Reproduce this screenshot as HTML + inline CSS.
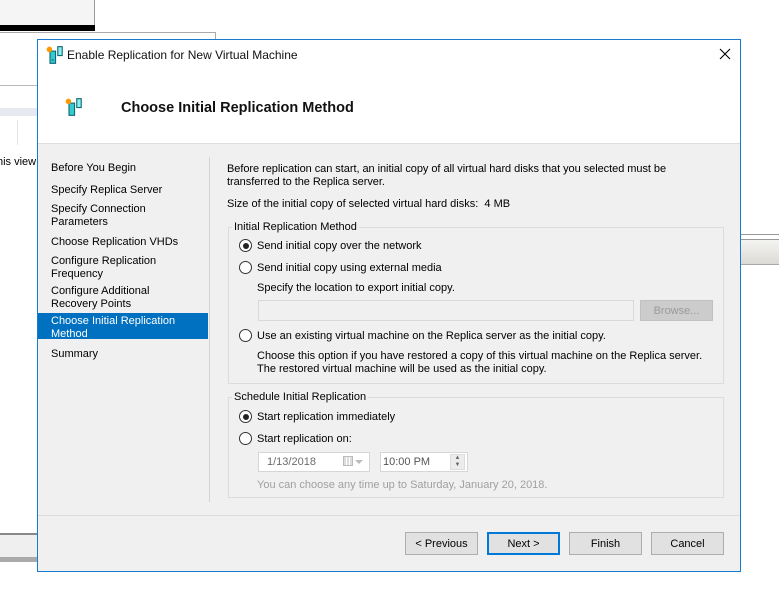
<!DOCTYPE html>
<html><head><meta charset="utf-8"><style>
*{margin:0;padding:0;box-sizing:border-box}
body{width:779px;height:599px;background:#fff;position:relative;overflow:hidden;font-family:"Liberation Sans",sans-serif;font-size:11px;color:#000}
.a{position:absolute;white-space:nowrap}
.t{padding-top:1px}
.r{position:absolute;width:13px;height:13px;border:1px solid #333;border-radius:50%;background:#fff}
.r.on::after{content:"";position:absolute;left:2.5px;top:2.5px;width:6px;height:6px;border-radius:50%;background:#222}
.btn{position:absolute;top:532px;width:73px;height:23px;background:#e1e1e1;border:1px solid #adadad;text-align:center;line-height:22px}
.grp{position:absolute;border:1px solid #dcdcdc}
</style></head><body>
<div class="a" style="left:0;top:0;width:95px;height:25px;background:#f5f5f5;border-right:1px solid #999"></div>
<div class="a" style="left:0;top:25px;width:95px;height:6px;background:#000"></div>
<div class="a" style="left:0;top:32px;width:216px;height:1px;background:#aaa"></div>
<div class="a" style="left:215px;top:32px;width:1px;height:8px;background:#aaa"></div>
<div class="a" style="left:0;top:85px;width:37px;height:1px;background:#bbb"></div>
<div class="a" style="left:0;top:108px;width:37px;height:8px;background:#e6eaf0"></div>
<div class="a" style="left:17px;top:120px;width:1px;height:25px;background:#e5e5e5"></div>
<div class="a t" style="left:-3px;top:155px">his view</div>
<div class="a" style="left:0;top:533px;width:37px;height:2px;background:#888"></div>
<div class="a" style="left:0;top:535px;width:37px;height:22px;background:#efefef"></div>
<div class="a" style="left:0;top:557px;width:37px;height:5px;background:#aaa"></div>
<div class="a" style="left:741px;top:234px;width:38px;height:1px;background:#999"></div>
<div class="a" style="left:741px;top:239px;width:38px;height:26px;background:linear-gradient(#f4f4f2,#dcdad5);border-top:1px solid #999;border-bottom:1px solid #aaa"></div>
<div class="a" style="left:37px;top:39px;width:704px;height:533px;border:1px solid #1a7ad0;background:#f0f0f0"></div>
<div class="a" style="left:38px;top:40px;width:702px;height:104px;background:#fff;border-bottom:1px solid #dedede"></div>
<svg class="a" style="left:46px;top:45px" width="18" height="20" viewBox="0 0 16 18"><rect x="3.5" y="5.5" width="5" height="11" fill="#3cc" stroke="#167"/><rect x="10.5" y="1.5" width="4" height="8" fill="#8ee" stroke="#167"/><circle cx="3" cy="4" r="2.5" fill="#f90"/><rect x="5" y="13" width="2" height="1" fill="#167"/></svg>
<div class="a t" style="left:67px;top:47px;font-size:12px;color:#111">Enable Replication for New Virtual Machine</div>
<svg class="a" style="left:719px;top:48px" width="12" height="12"><path d="M1 1L11 11M11 1L1 11" stroke="#000" stroke-width="1.1"/></svg>
<svg class="a" style="left:65px;top:97px" width="18" height="20" viewBox="0 0 16 18"><rect x="3.5" y="5.5" width="5" height="11" fill="#3cc" stroke="#167"/><rect x="10.5" y="1.5" width="4" height="8" fill="#8ee" stroke="#167"/><circle cx="3" cy="4" r="2.5" fill="#f90"/></svg>
<div class="a t" style="left:121px;top:99px;font-size:14.5px;font-weight:bold;color:#111">Choose Initial Replication Method</div>
<div class="a" style="left:209px;top:157px;width:1px;height:345px;background:#d4d4d4"></div>
<div class="a" style="left:38px;top:313px;width:170px;height:26px;background:#0070c0"></div>
<div class="a t" style="left:51px;top:161px">Before You Begin</div>
<div class="a t" style="left:51px;top:183px">Specify Replica Server</div>
<div class="a t" style="left:51px;top:202px;line-height:13px">Specify Connection<br>Parameters</div>
<div class="a t" style="left:51px;top:235px">Choose Replication VHDs</div>
<div class="a t" style="left:51px;top:254px;line-height:13px">Configure Replication<br>Frequency</div>
<div class="a t" style="left:51px;top:284px;line-height:13px">Configure Additional<br>Recovery Points</div>
<div class="a t" style="left:51px;top:314px;line-height:13px;color:#fff">Choose Initial Replication<br>Method</div>
<div class="a t" style="left:51px;top:347px">Summary</div>
<div class="a t" style="left:227px;top:162px;line-height:13px;letter-spacing:-0.05px">Before replication can start, an initial copy of all virtual hard disks that you selected must be<br>transferred to the Replica server.</div>
<div class="a t" style="left:227px;top:197px">Size of the initial copy of selected virtual hard disks:&nbsp; 4 MB</div>
<div class="grp" style="left:228px;top:227px;width:496px;height:157px"></div>
<div class="a t" style="left:232px;top:220px;background:#f0f0f0;padding-left:2px;padding-right:2px">Initial Replication Method</div>
<div class="r on" style="left:239px;top:239px"></div>
<div class="a t" style="left:257px;top:239px">Send initial copy over the network</div>
<div class="r" style="left:239px;top:261px"></div>
<div class="a t" style="left:257px;top:261px">Send initial copy using external media</div>
<div class="a t" style="left:257px;top:281px">Specify the location to export initial copy.</div>
<div class="a" style="left:258px;top:300px;width:376px;height:21px;border:1px solid #d9d9d9;background:#f0f0f0"></div>
<div class="a" style="left:640px;top:300px;width:73px;height:21px;background:#cccccc;border:1px solid #c0c0c0;color:#9a9a9a;text-align:center;line-height:20px">Browse...</div>
<div class="r" style="left:239px;top:329px"></div>
<div class="a t" style="left:257px;top:329px">Use an existing virtual machine on the Replica server as the initial copy.</div>
<div class="a t" style="left:257px;top:349px;line-height:13px">Choose this option if you have restored a copy of this virtual machine on the Replica server.<br>The restored virtual machine will be used as the initial copy.</div>
<div class="grp" style="left:228px;top:397px;width:496px;height:101px"></div>
<div class="a t" style="left:232px;top:390px;background:#f0f0f0;padding-left:2px;padding-right:2px">Schedule Initial Replication</div>
<div class="r on" style="left:239px;top:410px"></div>
<div class="a t" style="left:257px;top:410px">Start replication immediately</div>
<div class="r" style="left:239px;top:432px"></div>
<div class="a t" style="left:257px;top:432px">Start replication on:</div>
<div class="a" style="left:258px;top:452px;width:112px;height:20px;background:#fff;border:1px solid #d6d6d6;color:#6d6d6d;padding-left:8px;line-height:19px">1/13/2018</div>
<div class="a" style="left:343px;top:456px;width:10px;height:10px;border:1px solid #bbb;background:repeating-linear-gradient(90deg,#ddd 0 2px,#fff 2px 3px)"></div>
<div class="a" style="left:355px;top:460px;width:0;height:0;border-left:4px solid transparent;border-right:4px solid transparent;border-top:4px solid #bbb"></div>
<div class="a" style="left:380px;top:452px;width:88px;height:20px;background:#fff;border:1px solid #d6d6d6;color:#555;padding-left:2px;line-height:19px">10:00 PM</div>
<div class="a" style="left:450px;top:454px;width:15px;height:16px;background:#ececec;border:1px solid #ddd;font-size:6px;line-height:7px;text-align:center;color:#666">▲<br>▼</div>
<div class="a t" style="left:257px;top:478px;color:#a0a0a0">You can choose any time up to Saturday, January 20, 2018.</div>
<div class="a" style="left:38px;top:515px;width:702px;height:1px;background:#dcdcdc"></div>
<div class="btn" style="left:405px">&lt; Previous</div>
<div class="btn" style="left:487px;border:2px solid #0078d7;line-height:20px">Next &gt;</div>
<div class="btn" style="left:569px">Finish</div>
<div class="btn" style="left:651px">Cancel</div>
</body></html>
